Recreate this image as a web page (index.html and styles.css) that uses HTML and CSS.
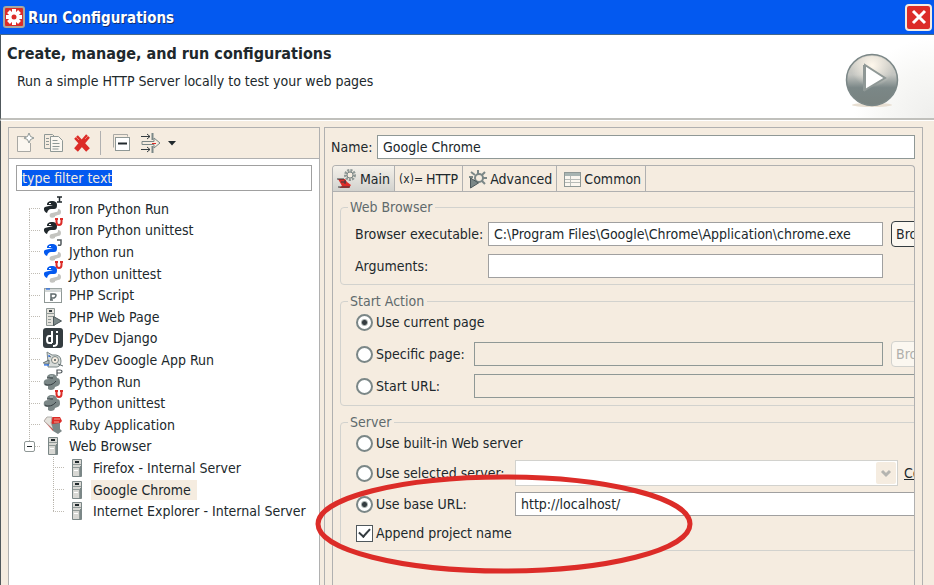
FILE: index.html
```html
<!DOCTYPE html>
<html lang="en">
<head>
<meta charset="utf-8">
<title>Run Configurations</title>
<link rel="stylesheet" href="styles.css">
</head>
<body>
<svg class="defs" aria-hidden="true">
  <symbol id="snake" viewBox="0 0 20 20">
    <path d="M7 18c-1-2 0-4 2-4l4-1c2 0 2-2 2-3 2 0 3 1 3 3s-1 3-3 3l-3 1v1c-2 1-4 1-5 0z" fill="#c4c4c0"/>
    <path d="M4 6c0-3 2-4 5-4s5 1 5 4-1 4-3 4H8c-2 0-3 1-4 4-3-1-4-5-2-6s6-1 8-2H4z" fill="currentColor"/>
    <path d="M6 4.500h2" stroke="#fff"/>
  </symbol>
  <symbol id="python" viewBox="0 0 20 20">
    <path d="M4 6c0-3 2-4 5-4s5 2 5 4c3 0 3 3 3 5s-2 3-5 4c0 3-5 4-7 2v-3c-3 0-5-1-4-5 1-2 4-2 7-2z" fill="#7b8787"/>
    <path d="M4 6h6M2 12c3 2 8 1 11-3" fill="none" stroke="#343c40"/>
    <path d="M7 4h3" stroke="#b8c4c4"/>
  </symbol>
  <symbol id="server" viewBox="0 0 12 20">
    <path d="M1.500 1.500h9v17h-9z" fill="#d8d8d4" stroke="#7b8787"/>
    <path d="M2 6.500h8M2 9.500h8M8.500 10v8" fill="none" stroke="#8f9896"/>
    <path d="M4 3h4v2H4z" fill="#20282c"/>
    <path d="M3 12h4v1H3z" fill="#fff"/>
    <path d="M9 8h2v10H9z" fill="#7b8787"/>
  </symbol>
  <symbol id="mark-u" viewBox="0 0 8 8"><path d="M0 1h3M5 1h3M1.500 1v3q0 3 2.500 3t2.500-3V1" fill="none" stroke="#dc2c28" stroke-width="2"/></symbol>
  <symbol id="mark-i" viewBox="0 0 8 8"><path d="M2 1h5M2 6h5M4.500 1v5" fill="none" stroke="#20282c" stroke-width="1.500"/></symbol>
  <symbol id="mark-j" viewBox="0 0 8 8"><path d="M2 1h4v4q0 2-3 1" fill="none" stroke="#50585c" stroke-width="1.500"/></symbol>
  <symbol id="mark-p" viewBox="0 0 8 8"><path d="M2 7V1h3q2 0 2 1.500T5 4H2" fill="none" stroke="#50585c" stroke-width="1.200"/></symbol>
</svg>

<div class="window">
  <header class="titlebar">
    <svg class="app-icon" viewBox="0 0 22 22" aria-hidden="true">
      <rect width="22" height="22" rx="3" fill="#a8a8a0"/><rect x="2" y="2" width="18" height="18" rx="1" fill="#dc2c28"/>
      <g stroke="#fff" stroke-width="4"><path d="M11 3v16M3 11h16M5.500 5.500l11 11M16.500 5.500l-11 11"/></g>
      <circle cx="11" cy="11" r="5" fill="#fff"/><circle cx="11" cy="11" r="2.500" fill="#dc2c28"/>
    </svg>
    <h1>Run Configurations</h1>
    <button class="close" aria-label="Close"><svg viewBox="0 0 16 16"><path d="M2 2l12 12M14 2L2 14" stroke="#fff" stroke-width="3"/></svg></button>
  </header>

  <section class="banner">
    <div>
      <h2>Create, manage, and run configurations</h2>
      <p>Run a simple HTTP Server locally to test your web pages</p>
    </div>
    <svg class="play" viewBox="0 0 56 56" aria-hidden="true">
      <defs>
        <linearGradient id="ball" x1="0" y1="0" x2="0" y2="1"><stop offset="0" stop-color="#d8d4cc"/><stop offset=".4" stop-color="#c2c4c0"/><stop offset=".65" stop-color="#7b8787"/><stop offset="1" stop-color="#78827f"/></linearGradient>
        <radialGradient id="shine" cx=".5" cy=".2" r=".45"><stop offset="0" stop-color="#fff8ec"/><stop offset="1" stop-color="#fff8ec" stop-opacity="0"/></radialGradient>
      </defs>
      <ellipse cx="28" cy="53" rx="20" ry="2" fill="#e8dfd2"/>
      <circle cx="28" cy="28" r="25.500" fill="url(#ball)" stroke="#7b8787" stroke-width="1.500"/>
      <circle cx="28" cy="28" r="24" fill="url(#shine)"/>
      <path d="M21 13v25l20-12z" fill="#fff" stroke="#8f9896" stroke-width="2"/>
      <path d="M20 13v26" stroke="#8f9896" stroke-width="2"/>
    </svg>
  </section>

  <main class="body">
    <section class="panel nav">
      <div class="toolbar" role="toolbar">
        <button aria-label="New"><svg viewBox="0 0 20 20"><path d="M2.500 3.500h9M2.500 3v15.500h13V10" fill="#fbf7f0" stroke="#a8a8a4"/><path d="M14 0l1.500 3.500L19 5l-3.500 1.500L14 10l-1.500-3.500L9 5l3.500-1.500z" fill="#fff" stroke="#8f9896"/></svg></button>
        <button aria-label="Duplicate"><svg viewBox="0 0 20 20"><path d="M1.500 1.500h8l2 2v12h-10z" fill="#f5ece0" stroke="#8f9896"/><path d="M7.500 3.500h8l4 4v11h-12z" fill="#fbf7f0" stroke="#8f9896"/><path d="M3 5.500h3M3 8.500h3M3 11.500h3M9.500 7.500h5M9.500 10.500h7M9.500 13.500h7M9.500 16h6" stroke="#8f9896"/></svg></button>
        <button aria-label="Delete"><svg viewBox="0 0 20 20"><path d="M5 4l12 13M17 3L5 17" stroke="#dc2c28" stroke-width="5"/><path d="M5 4l3 3M17 3l-3 3" stroke="#f08070"/></svg></button>
        <span class="sep"></span>
        <button aria-label="Collapse all"><svg viewBox="0 0 20 20"><path d="M1.500 14.500v-13h14v2" fill="none" stroke="#a8a8a4"/><rect x="3.500" y="4.500" width="14" height="13" fill="#fff" stroke="#8f9896"/><path d="M6 10.500h9" stroke="#20282c" stroke-width="2"/></svg></button>
        <button aria-label="Filter"><svg viewBox="0 0 20 20"><path d="M1 3.500h9M1 16.500h9M7 1l3 2.500L7 6M7 14l3 2.500L7 19" fill="none" stroke="#343c40"/><path d="M12.500 0v7M12.500 13v7" stroke="#7b8787" stroke-width="2"/><path d="M2 8.500h12V5l6 5-6 5v-3.500H2z" fill="#f5ece0" stroke="#7b8787"/><path d="M12 10.500h4" stroke="#dc2c28"/></svg></button>
        <button class="drop" aria-label="Filter menu"><svg viewBox="0 0 8 5"><path d="M0 0h8L4 4.500z" fill="#20282c"/></svg></button>
      </div>
      <input class="field search" id="filter" type="text" value="type filter text" aria-label="Filter" autofocus>
      <ul class="tree">
        <li class="first"><svg class="ico dark"><use href="#snake"/></svg><svg class="mark"><use href="#mark-i"/></svg><span>Iron Python Run</span></li>
        <li><svg class="ico dark"><use href="#snake"/></svg><svg class="mark"><use href="#mark-u"/></svg><span>Iron Python unittest</span></li>
        <li><svg class="ico blue"><use href="#snake"/></svg><svg class="mark"><use href="#mark-j"/></svg><span>Jython run</span></li>
        <li><svg class="ico blue"><use href="#snake"/></svg><svg class="mark"><use href="#mark-u"/></svg><span>Jython unittest</span></li>
        <li><svg class="ico" viewBox="0 0 20 20"><rect x="1.500" y="3.500" width="17" height="14" fill="#fff" stroke="#8f9896"/><path d="M1 4h18M1 6h18" stroke="#a8b0ae"/><path d="M3 4h4" stroke="#0359f0"/><path d="M8 15V9h3q2 0 2 1.500T11 13H8M7 15h3" fill="none" stroke="#5f6a6c" stroke-width="1.500"/></svg><span>PHP Script</span></li>
        <li><svg class="ico" viewBox="0 0 20 20"><path d="M3.500 1.500h8v5h-8zM3.500 6.500h8v12h-8z" fill="#e4e2dc" stroke="#8f9896"/><path d="M5 9.500h5M5 12.500h3M5 15.500h3" stroke="#8f9896"/><path d="M6 3h3v2H6z" fill="#343c40"/><path d="M10.500 9.500v9l8-4.500z" fill="#7b8787" stroke="#4d585b"/></svg><span>PHP Web Page</span></li>
        <li><svg class="ico" viewBox="0 0 20 20"><rect width="20" height="20" rx="3" fill="#343c40"/><path d="M9 3v12M9 8H6q-2 0-2 3.500T6 15h3M14 7v8q0 3-4 3M14 3v2" fill="none" stroke="#fff" stroke-width="2"/></svg><span>PyDev Django</span></li>
        <li><svg class="ico" viewBox="0 0 20 20"><path d="M5 12L4 2l5 3q9-1 9 6t-7 6H5z" fill="#d8dcda" stroke="#7b8787"/><path d="M6 6l2 1M0 13l6-3v4H1M15 14l5 2" stroke="#5f6a6c" fill="#b8c4c4"/><circle cx="12" cy="10" r="3.500" fill="#f5ece0" stroke="#7b8787"/><circle cx="12" cy="10" r="1" fill="#4d585b"/><path d="M1 15h5M6 5v2" stroke="#0359f0"/></svg><span>PyDev Google App Run</span></li>
        <li><svg class="ico"><use href="#python"/></svg><svg class="mark"><use href="#mark-p"/></svg><span>Python Run</span></li>
        <li><svg class="ico"><use href="#python"/></svg><svg class="mark"><use href="#mark-u"/></svg><span>Python unittest</span></li>
        <li><svg class="ico" viewBox="0 0 20 20"><path d="M1 6l3-4h13l2 4-9 10z" fill="#dc2c28"/><path d="M1 6l3-4h5L8 8l3 7z" fill="#e4e2dc" stroke="#b0b0ac"/><path d="M11 4h6M11 7h5" stroke="#f5a090"/><path d="M9 9l8-1v6l2 2-4 3-5-3z" fill="#7b8787"/></svg><span>Ruby Application</span></li>
        <li class="branch"><button class="toggle" aria-label="Collapse Web Browser"></button><svg class="ico"><use href="#server"/></svg><span>Web Browser</span></li>
        <li class="child"><svg class="ico"><use href="#server"/></svg><span>Firefox - Internal Server</span></li>
        <li class="child"><svg class="ico"><use href="#server"/></svg><span class="selected">Google Chrome</span></li>
        <li class="child last"><svg class="ico"><use href="#server"/></svg><span>Internet Explorer - Internal Server</span></li>
      </ul>
    </section>

    <section class="panel detail">
      <div class="name-row"><label for="name">Name:</label><input class="field dim" id="name" type="text" value="Google Chrome"></div>
      <div class="folder">
        <div class="tabs" role="tablist">
          <button class="tab active" role="tab" aria-selected="true"><svg viewBox="0 0 20 20"><circle cx="13" cy="6" r="4.500" fill="#f5ece0" stroke="#8f9896" stroke-width="3" stroke-dasharray="2 1"/><circle cx="13" cy="6" r="3" fill="none" stroke="#7b8787"/><path d="M1 10h7l2 3 4 3-2 3H2l3-2z" fill="#dc2c28"/><path d="M0 10h7M4 13h5M1 18h12M8 11v4" stroke="#343c40"/></svg>Main</button>
          <button class="tab" role="tab"><span class="var">(x)=</span>HTTP</button>
          <button class="tab wide" role="tab"><svg viewBox="0 0 20 20"><path d="M10 1v4M3 3l4 3M17 3l-3 3M19 9h-4M17 15l-3-3M1 8h4" stroke="#7b8787" stroke-width="2"/><circle cx="11" cy="9" r="4" fill="#f5ece0" stroke="#7b8787" stroke-width="2"/><path d="M2.500 9v10l8-5z" fill="#7b8787" stroke="#4d585b"/></svg>Advanced</button>
          <button class="tab wide" role="tab"><svg viewBox="0 0 20 20"><rect x="2.500" y="3.500" width="16" height="14" fill="#fbf7f0" stroke="#8f9896"/><path d="M3 5.500h15" stroke="#a8b4b2" stroke-width="3"/><path d="M3 10.500h15M3 13.500h15M8.500 7v10" stroke="#b8bcb8"/></svg>Common</button>
        </div>
        <div class="page">
          <fieldset class="group web">
            <legend>Web Browser</legend>
            <div class="row"><label for="exe">Browser executable:</label><input class="field" id="exe" type="text" value="C:\Program Files\Google\Chrome\Application\chrome.exe"><button class="browse">Browse...</button></div>
            <div class="row"><label for="args">Arguments:</label><input class="field" id="args" type="text"><span class="blank"></span></div>
          </fieldset>
          <fieldset class="group start">
            <legend>Start Action</legend>
            <div class="row"><label><input type="radio" name="start" checked>Use current page</label></div>
            <div class="row"><label><input type="radio" name="start">Specific page:</label><input class="field dim" type="text" aria-label="Specific page" disabled><button class="browse" disabled>Browse...</button></div>
            <div class="row"><label><input type="radio" name="start">Start URL:</label><input class="field dim" type="text" aria-label="Start URL" disabled></div>
          </fieldset>
          <fieldset class="group host">
            <legend>Server</legend>
            <div class="row short"><label><input type="radio" name="server">Use built-in Web server</label></div>
            <div class="row"><label><input type="radio" name="server">Use selected server:</label><span class="combo"><select aria-label="Server" disabled></select><svg viewBox="0 0 20 22" aria-hidden="true"><rect width="20" height="22" rx="2" fill="#f5ece0"/><path d="M6 9l4 4 4-4" fill="none" stroke="#b4b4b0" stroke-width="3"/></svg></span><a href="#">Configure</a></div>
            <div class="row"><label><input type="radio" name="server" checked>Use base URL:</label><input class="field" type="text" aria-label="Base URL" value="http://localhost/"></div>
            <div class="row short"><label><input type="checkbox" checked>Append project name</label></div>
          </fieldset>
        </div>
      </div>
      <svg class="ring" viewBox="0 0 378 100" aria-hidden="true"><ellipse cx="189" cy="50" rx="186" ry="47" fill="none" stroke="#dc2c28" stroke-width="5"/></svg>
    </section>
  </main>
</div>
<script src="script.js"></script>
</body>
</html>
```
FILE: script.js
```js
const filter = document.getElementById("filter");
filter.focus();
filter.select();
```
FILE: styles.css
```css
:root {
  --face: #f5ece0;
  --line: #b0b0b0;
  --soft: #d2d2ce;
  --ink: #20282c;
  --red: #dc2c28;
  --blue: #0359f0;
}
* { box-sizing: border-box; }
body {
  margin: 0;
  color: var(--ink);
  background: var(--face);
  font: 14px/16px "DejaVu Sans Condensed", "DejaVu Sans", sans-serif;
}
button, input, select { font: inherit; color: inherit; margin: 0; }
button { padding: 0; border: 0; background: none; }
h1, h2, p, ul { margin: 0; padding: 0; }
svg { display: block; flex: none; }
.defs { position: absolute; width: 0; height: 0; }

.window { display: flex; flex-direction: column; height: 100vh; overflow: hidden; }

.titlebar {
  display: flex;
  align-items: center;
  gap: 3px;
  height: 35px;
  flex: none;
  padding: 0 2px 0 3px;
  color: #fff;
  background: var(--blue);
  border-bottom: 1px solid #44688c;
}
.titlebar h1 { flex: 1; padding-top: 2px; font-size: 15px; line-height: 20px; text-shadow: 1px 1px #103070; }
.app-icon { width: 22px; height: 22px; }
.close {
  display: grid;
  place-items: center;
  width: 27px;
  height: 27px;
  border: 2px solid #f5ece0;
  border-radius: 4px;
  background: var(--red);
}
.close svg { width: 16px; height: 16px; }

.banner {
  display: flex;
  justify-content: space-between;
  flex: none;
  height: 85px;
  padding: 9px 34px 0 6px;
  border-left: 1px solid #50585c;
  border-bottom: 2px solid #c0c0bc;
  background: radial-gradient(circle at 100% 100%, #eeeeec 0, #f8f8f6 50px, #fff 80px);
}
.banner h2 { font-size: 16px; line-height: 20px; }
.banner p { margin: 9px 0 0 10px; }
.play { width: 56px; height: 56px; margin-top: 8px; }

.body {
  display: flex;
  flex: 1;
  gap: 4px;
  padding: 6px 11px 0 7px;
  min-height: 0;
  border-left: 1px solid #50585c;
  border-top: 1px solid #fff;
}
.panel { border: 1px solid var(--line); border-bottom: 0; }
.nav { flex: 0 0 312px; background: #fff; }
.detail { position: relative; flex: 1; min-width: 0; display: flex; flex-direction: column; padding: 7px 7px 0 6px; }

.toolbar {
  display: flex;
  align-items: center;
  gap: 8px;
  height: 31px;
  padding-left: 6px;
  background: var(--face);
  border-bottom: 1px solid var(--line);
}
.toolbar svg { width: 20px; height: 20px; }
.toolbar .drop svg { width: 8px; height: 5px; }
.sep { width: 1px; height: 24px; margin: 0 3px 0 1px; background: var(--line); }

.field {
  flex: 1;
  min-width: 0;
  height: 24px;
  padding: 0 5px;
  border: 1px solid #a0a0a0;
  border-radius: 0;
  background: #fff;
  outline: 0;
}
.field.dim { border-color: #8f9896; }
.field:disabled { background: var(--face); }
.search { display: block; width: calc(100% - 14px); height: 26px; margin: 6px 7px 0; }
.search::selection { color: #f5ece0; background: var(--blue); }

.tree {
  display: grid;
  grid-auto-rows: 1fr;
  height: 324px;
  margin: 7px 0 0 20px;
  list-style: none;
}
.tree li {
  position: relative;
  display: flex;
  align-items: center;
  padding-left: 14px;
  background:
    repeating-linear-gradient(90deg, #c0bcb4 0 1px, transparent 1px 2px) 0 50% / 12px 1px no-repeat,
    repeating-linear-gradient(#b8b4ac 0 1px, transparent 1px 2px) 0 0 / 1px 100% no-repeat;
}
.tree li.first { background-position: 0 50%, 0 100%; background-size: 12px 1px, 1px 50%; }
.tree li.branch { background-size: 12px 1px, 1px 50%; }
.tree li.child { margin-left: 24px; }
.tree li.last { background-size: 12px 1px, 1px 50%; }
.tree span { margin-left: 4px; padding: 2px; white-space: nowrap; }
.tree .selected { padding: 2px 6px 2px 2px; background: var(--face); }
.ico { width: 20px; height: 20px; }
.dark { color: #20282c; }
.blue { color: var(--blue); }
.mark { position: absolute; left: 26px; top: -2px; width: 8px; height: 8px; }
.toggle {
  position: absolute;
  left: -5px;
  top: 5px;
  width: 11px;
  height: 11px;
  border: 1px solid #8f9896;
  border-radius: 2px;
  background: linear-gradient(var(--ink), var(--ink)) center / 5px 1px no-repeat #fff;
}

.name-row { display: flex; align-items: center; }
.name-row label { width: 46px; }

.folder {
  display: flex;
  flex: 1;
  flex-direction: column;
  margin: 6px 0 0 1px;
  min-height: 0;
  border: 1px solid var(--line);
  border-bottom: 0;
  border-radius: 4px 4px 0 0;
  overflow: hidden;
}
.tabs { display: flex; height: 26px; flex: none; border-bottom: 1px solid var(--line); }
.tab { display: flex; align-items: center; gap: 3px; padding: 0 4px; border-right: 1px solid var(--line); }
.tab.wide { gap: 2px; padding-left: 5px; }
.tab.active { background: linear-gradient(#f5f1ea, #d2d2ce); }
.tab svg { width: 20px; height: 20px; }
.var { font-size: 12px; }

.page { flex: 1; padding: 7px 0 0 7px; margin-right: -70px; }
.group {
  display: flex;
  flex-direction: column;
  min-width: 0;
  gap: 8px;
  margin: 0 0 8px;
  border: 1px solid var(--soft);
  border-radius: 4px;
}
.group legend { margin-left: -7px; padding: 0 3px 0 2px; color: #5f6a6c; line-height: 16px; }
.web { padding: 7px 8px 6px 14px; }
.start { padding: 1px 8px 7px 14px; }
.host { gap: 6px; padding: 2px 8px 6px 14px; }
.row { display: flex; align-items: center; min-height: 24px; white-space: nowrap; }
.row.short { min-height: 22px; }
.web label { width: 133px; }
.start label { width: 119px; }
.host label { width: 160px; }
.start label, .host label { display: flex; align-items: center; gap: 3px; flex: none; }
.browse, .blank { width: 84px; margin-left: 8px; }
.browse {
  height: 26px;
  margin-top: -1px;
  margin-bottom: -1px;
  padding-left: 4px;
  text-align: left;
  border: 1px solid #343c40;
  border-radius: 4px;
  background: #fbf7f0;
}
.browse:disabled { color: #b0b0ac; border-color: var(--soft); }

input[type="radio"], input[type="checkbox"] {
  appearance: none;
  width: 17px;
  height: 17px;
  border: 2px solid #7b8787;
  border-radius: 50%;
  background: #fff;
}
.row label input { flex: none; }
.start label, .host label { padding-left: 1px; }
input[type="radio"]:checked { background: radial-gradient(circle, #343c40 0, #343c40 2px, #a8b0ae 3px, #fff 4px); }
input[type="checkbox"] { display: grid; place-items: center; border-color: #50585c; border-width: 1px; border-radius: 0; }
input[type="checkbox"]:checked::after {
  content: "";
  width: 5px;
  height: 9px;
  margin-bottom: 3px;
  border: solid #343c40;
  border-width: 0 2px 2px 0;
  transform: rotate(42deg);
}

.combo { position: relative; flex: 1; }
.combo select {
  display: block;
  appearance: none;
  width: 100%;
  height: 26px;
  border: 1px solid var(--soft);
  border-radius: 0;
  background: #fff;
  opacity: 1;
}
.combo svg { position: absolute; right: 2px; top: 2px; width: 20px; height: 22px; }
.row a { width: 71px; margin-left: 6px; color: inherit; }

.ring { position: absolute; left: -10px; top: 346px; width: 378px; height: 100px; pointer-events: none; }
```
